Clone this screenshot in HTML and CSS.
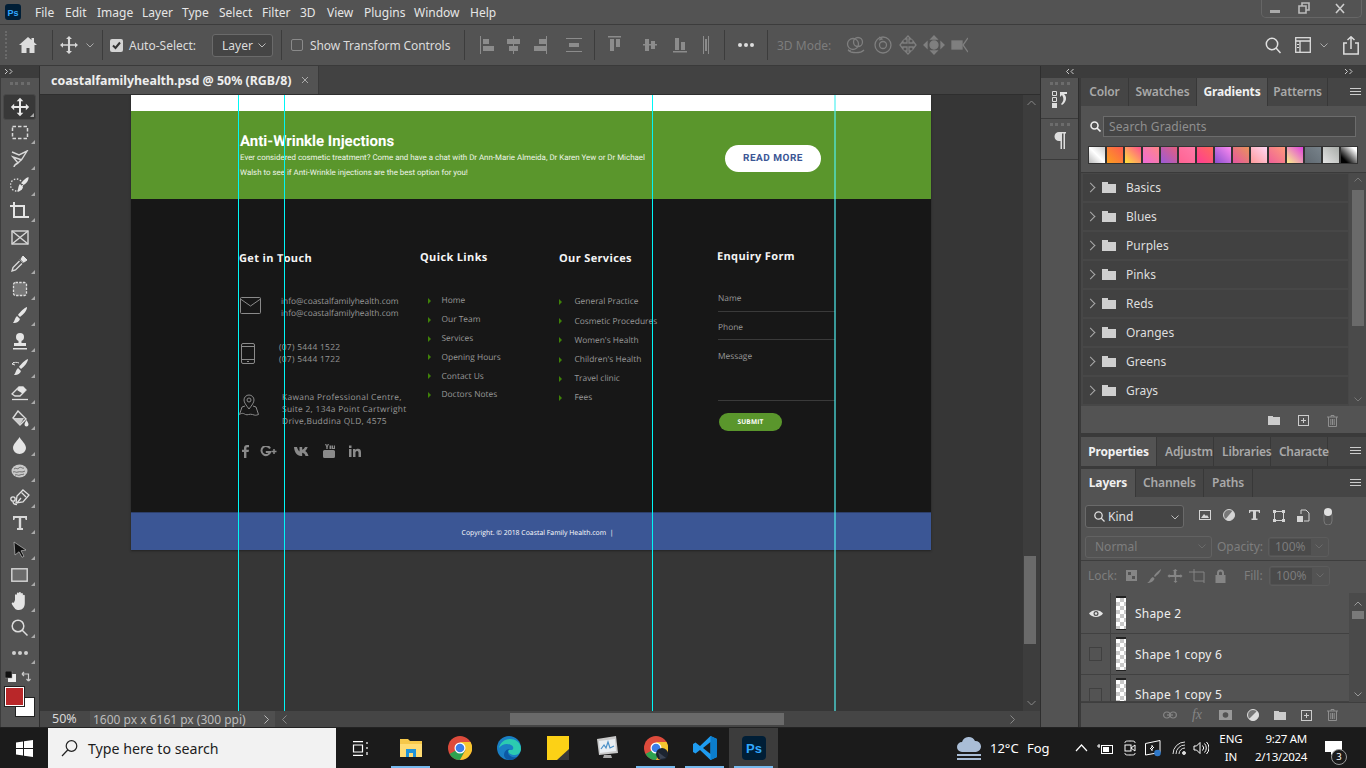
FILE: index.html
```html
<!DOCTYPE html>
<html lang="en">
<head>
<meta charset="utf-8">
<title>Photoshop</title>
<link rel="stylesheet" href="styles.css">
</head>
<body>
<div class="app">
  <header class="menubar">
    <svg class="pslogo" width="16" height="16" viewBox="0 0 16 16"><rect width="16" height="16" rx="3" fill="#001e36"/><text x="2.5" y="11.5" class="pslogo-t">Ps</text></svg>
    <nav class="menu">
      <span class="m1">File</span><span class="m2">Edit</span><span class="m3">Image</span><span class="m4">Layer</span><span class="m5">Type</span><span class="m6">Select</span><span class="m7">Filter</span><span class="m8">3D</span><span class="m9">View</span><span class="m10">Plugins</span><span class="m11">Window</span><span class="m12">Help</span>
    </nav>
    <div class="winctl">
      <svg width="101" height="17" viewBox="0 0 101 17"><rect x="8" y="10" width="10" height="3" fill="#aaa"/><path d="M37 6h7v7h-7zM40 6V3h7v7h-3" fill="none" stroke="#bbb" stroke-width="1.6"/><path d="M74 4l8 9M82 4l-8 9" stroke="#ccc" stroke-width="1.6"/></svg>
    </div>
  </header>

  <section class="options">
    <div class="grip"></div>
    <svg class="o-home" width="18" height="16" viewBox="0 0 18 16"><path d="M9 0L0 8h2.500v8h5v-5h3v5h5V8H18l-3-2.700V1h-2.500v2.100z" fill="#ddd"/></svg>
    <i class="sep s-a"></i>
    <svg class="o-move" width="18" height="18" viewBox="0 0 24 24"><path d="M12 0l4 4h-2.600v7H20V8.500l4 3.500-4 3.500V13h-6.600v7H16l-4 4-4-4h2.600v-7H4v2.500L0 12l4-3.500V11h6.600V4H8z" fill="#d8d8d8"/></svg>
    <svg class="o-chev" width="8" height="5" viewBox="0 0 8 5"><path d="M.5.5L4 4 7.500.5" fill="none" stroke="#aaa"/></svg>
    <i class="sep s-b"></i>
    <svg class="o-check" width="13" height="13" viewBox="0 0 13 13"><rect width="13" height="13" rx="2" fill="#d4d4d4"/><path d="M3 6.500l2.500 2.500L10 3.500" fill="none" stroke="#333" stroke-width="2"/></svg>
    <span class="o-auto">Auto-Select:</span>
    <div class="o-select">Layer<svg width="8" height="5" viewBox="0 0 8 5"><path d="M.5.5L4 4 7.500.5" fill="none" stroke="#bbb"/></svg></div>
    <i class="sep s-c"></i>
    <i class="o-box"></i>
    <span class="o-trans">Show Transform Controls</span>
    <i class="sep s-d"></i>
    <svg class="o-align" width="102" height="18" viewBox="0 0 102 18" fill="#8c8c8c"><path d="M0 0h1v18H0zM3 3h6v5H3zM3 10h11v5H3zM33 0h1v18h-1zM27 3h13v5H27zM29 10h9v5h-9zM66 0h1v18h-1zM59 3h7v5h-7zM54 10h12v5H54zM86 2h16v1H86zM86 15h16v1H86zM89 7h10v4H89z"/></svg>
    <i class="sep s-e"></i>
    <svg class="o-dist" width="101" height="18" viewBox="0 0 101 18" fill="#8c8c8c"><path d="M0 0h13v1.500H0zM2 3h4v12H2zM8 3h4v8H8zM35 8h14v1.500H35zM37 3h4v12h-4zM43 5h4v8h-4zM65 15h14v1.500H65zM67 2h4v12h-4zM73 6h4v8h-4zM95 0h1v18h-1zM100 0h1v18h-1zM97 3h2v12h-2z"/></svg>
    <i class="sep s-f"></i>
    <svg class="o-dots" width="16" height="4" viewBox="0 0 16 4" fill="#ddd"><circle cx="2" cy="2" r="2"/><circle cx="8" cy="2" r="2"/><circle cx="14" cy="2" r="2"/></svg>
    <i class="sep s-g"></i>
    <span class="o-3d">3D Mode:</span>
    <svg class="o-3dicons" width="122" height="20" viewBox="0 0 122 20" fill="none" stroke="#7f7f7f" stroke-width="1.300"><circle cx="7" cy="9" r="5.500"/><circle cx="12" cy="7" r="4.500"/><path d="M2 15a9 5 0 0 0 16 0M2 15l3 1"/><circle cx="37" cy="10" r="8"/><circle cx="37" cy="10" r="3.500"/><path d="M33 2l3 2-3 1"/><path d="M62 1l3 3h-2v4h4V6l3 4-3 4v-2h-4v4h2l-3 3-3-3h2v-4h-4v2l-3-4 3-4v2h4V4h-2z"/><path d="M88 1l3 3h-6zM88 19l3-3h-6zM78 10l3-3v6zM98 10l-3-3v6z" fill="#7f7f7f"/><circle cx="88" cy="10" r="4" fill="#7f7f7f"/><rect x="106" y="6" width="10" height="8" fill="#7f7f7f"/><path d="M122 3l-5 7 5 7"/></svg>
    <svg class="o-search" width="16" height="17" viewBox="0 0 16 17" fill="none" stroke="#e0e0e0" stroke-width="1.500"><circle cx="7" cy="7" r="5.700"/><path d="M11 11l4.500 5"/></svg>
    <svg class="o-work" width="16" height="16" viewBox="0 0 16 16" fill="none" stroke="#ddd" stroke-width="1.300"><rect x=".7" y=".7" width="14.600" height="14.600"/><path d="M.7 4h14.600M5 4v11.300" /><path d="M2 7h2v1H2zM2 10h2v1H2z" fill="#ddd" stroke="none"/></svg>
    <svg class="o-chev2" width="8" height="5" viewBox="0 0 8 5"><path d="M.5.5L4 4 7.500.5" fill="none" stroke="#aaa"/></svg>
    <svg class="o-share" width="16" height="19" viewBox="0 0 16 19" fill="none" stroke="#ddd" stroke-width="1.500"><path d="M4 7H.8v11h14.400V7H12M8 13V1M4.500 4L8 .8 11.500 4"/></svg>
  </section>

  <main class="work">
    <aside class="toolcol">
      <div class="collapse"><svg width="10" height="7" viewBox="0 0 10 7"><path d="M1 1l2.500 2.500L1 6M5.500 1L8 3.500 5.500 6" fill="none" stroke="#ccc"/></svg></div>
      <div class="tools">
        <div class="tgrip"></div>
        <div class="tool active more"><svg width="20" height="20" viewBox="0 0 24 24"><path d="M12 1l4 4h-2.800v5.800H19V8l4 4-4 4v-2.800h-5.800V19H16l-4 4-4-4h2.800v-5.800H5V16l-4-4 4-4v2.800h5.800V5H8z" fill="#e8e8e8"/></svg></div>
        <div class="tool more"><svg width="18" height="16" viewBox="0 0 18 16"><rect x="1.500" y="1.500" width="15" height="12" fill="none" stroke="#d8d8d8" stroke-width="1.500" stroke-dasharray="3.500 2"/></svg></div>
        <div class="tool more"><svg width="18" height="18" viewBox="0 0 18 18" fill="none" stroke="#d8d8d8" stroke-width="1.400"><path d="M1 2l7 3 8-4-5 8-4 4-5-6 9 3"/><path d="M7 13c-2 1-4 2-4 4"/></svg></div>
        <div class="tool more"><svg width="20" height="18" viewBox="0 0 20 18"><circle cx="6.500" cy="9" r="6" fill="none" stroke="#d8d8d8" stroke-width="1.400" stroke-dasharray="1.500 1.600"/><path d="M18.500 1c.5 4-3 7-5 8l-2-2c1-2 4-5 7-6zM10 8l3 3c-.5 3-4 5-6 4.500 1.500-1.500 1-5.500 3-7.500z" fill="#e6e6e6"/></svg></div>
        <div class="tool more"><svg width="19" height="19" viewBox="0 0 19 19" fill="none" stroke="#e4e4e4" stroke-width="2"><path d="M0 4h14v11M4 0v15h15"/></svg></div>
        <div class="tool"><svg width="18" height="15" viewBox="0 0 18 15" fill="none" stroke="#d8d8d8" stroke-width="1.400"><rect x="1" y="1" width="16" height="13"/><path d="M1 1l16 13M17 1L1 14"/></svg></div>
        <div class="tool more"><svg width="17" height="17" viewBox="0 0 17 17"><path d="M12 1l4 4-3 2-3-3zM9 4.500l3.500 3.500" fill="#e4e4e4" stroke="#e4e4e4"/><path d="M8.500 6L2 12.500 1 16l3.500-1L11 8.500" fill="none" stroke="#d8d8d8" stroke-width="1.400"/></svg></div>
        <div class="tool more"><svg width="18" height="18" viewBox="0 0 18 18"><rect x="2.500" y="2.500" width="13" height="13" rx="2" fill="#777" stroke="#ddd" stroke-width="1.300" stroke-dasharray="2.500 1.200"/></svg></div>
        <div class="tool more"><svg width="16" height="17" viewBox="0 0 16 17"><path d="M15 0c.5 3-4 8-7 10L6 8c2-3 6-7 9-8zM5 9l3 3c-1 3-4 4.500-7 4 2-2 1.500-5 4-7z" fill="#e6e6e6"/></svg></div>
        <div class="tool more"><svg width="16" height="17" viewBox="0 0 16 17" fill="#e4e4e4"><circle cx="8" cy="4" r="4"/><path d="M6.500 7h3v3h-3zM2 10h12v3H2zM1 15h14v1.500H1z"/></svg></div>
        <div class="tool more"><svg width="18" height="17" viewBox="0 0 18 17" fill="#e4e4e4"><path d="M17 0c0 3-4 8-7 10L8 8c2-3 6-7 9-8zM7 9l3 3c-1 3-4 4.500-7 4 2-2 1.500-5 4-7z"/><path d="M1 5c2-2 5-2 7-1M1 5l2-2M1 5l3 1" fill="none" stroke="#ddd"/></svg></div>
        <div class="tool more"><svg width="18" height="16" viewBox="0 0 18 16"><path d="M1 9l7-7h4l3 3-6 6H4z" fill="none" stroke="#ddd" stroke-width="1.300"/><path d="M8 2h4l3 3-3.500 3.500L6 5z" fill="#e6e6e6"/><path d="M1 14.500h16" stroke="#ddd" stroke-width="1.300"/></svg></div>
        <div class="tool more"><svg width="18" height="18" viewBox="0 0 18 18"><path d="M7 1l8 8-6 6-7-7z" fill="none" stroke="#ddd" stroke-width="1.400"/><path d="M2 8h11l-4 7z" fill="#ccc"/><path d="M15.500 10c1 2 2 3 2 4.500a2 2 0 0 1-4 0c0-1.500 1-2.500 2-4.500z" fill="#e8e8e8"/></svg></div>
        <div class="tool more"><svg width="14" height="17" viewBox="0 0 14 17"><path d="M6.500 0C8 3 13 7 13 11a6.500 6 0 0 1-13 0C0 7 5 3 6.500 0z" fill="#e4e4e4"/></svg></div>
        <div class="tool more"><svg width="17" height="14" viewBox="0 0 17 14"><ellipse cx="8.500" cy="7" rx="8" ry="6.500" fill="#c8c8c8"/><path d="M3 5c2-2 3 1 5-1s3 1 5 0M2 8c2-1 3 1 5 0s4 1 7-1M4 11c2-1 3 1 5 0s2 0 4-1" fill="none" stroke="#555" stroke-width=".8"/></svg></div>
        <div class="tool more"><svg width="20" height="17" viewBox="0 0 20 17" fill="none" stroke="#e0e0e0" stroke-width="1.300"><path d="M13 1l6 5-6 7-7 1 1-7z"/><path d="M7 14l4-5M11.500 3.500L16 8"/><circle cx="3" cy="10" r="2.200"/><path d="M3 12.500c0 2 2 3 4 3"/></svg></div>
        <div class="tool more"><svg width="14" height="14" viewBox="0 0 14 14" fill="#d8d8d8"><path d="M0 0h14v4h-1.300L12 2H8.200v10H10v2H4v-2h1.800V2H2L1.300 4H0z"/></svg></div>
        <div class="tool more"><svg width="14" height="17" viewBox="0 0 14 17"><path d="M1 1l12 8-5 .8 3 5.500-2 1-3-5.500L2 14z" fill="#111" stroke="#bbb" stroke-width=".7"/></svg></div>
        <div class="tool more"><svg width="17" height="14" viewBox="0 0 17 14"><rect x=".8" y=".8" width="15.400" height="12.400" fill="#6b6b6b" stroke="#d8d8d8" stroke-width="1.400"/></svg></div>
        <div class="tool more"><svg width="17" height="18" viewBox="0 0 17 18" fill="#e4e4e4"><path d="M4 8V3a1 1 0 0 1 1.900 0V1.500a1 1 0 0 1 2 0V1a1 1 0 0 1 2 0v1a1 1 0 0 1 2 0v1.500a1 1 0 0 1 1.900 0V11c0 4-2 7-6 7-3 0-4-1-7-6-.5-1 1-2 2-1z"/></svg></div>
        <div class="tool more"><svg width="17" height="17" viewBox="0 0 17 17" fill="none" stroke="#dcdcdc" stroke-width="1.500"><circle cx="7" cy="7" r="5.800"/><path d="M11 11l5.500 5.500"/></svg></div>
        <div class="tool more"><svg width="16" height="4" viewBox="0 0 16 4" fill="#d0d0d0"><circle cx="2" cy="2" r="2"/><circle cx="8" cy="2" r="2"/><circle cx="14" cy="2" r="2"/></svg></div>
        <div class="swapline">
          <svg width="11" height="11" viewBox="0 0 11 11"><rect x="3" y="3" width="8" height="8" fill="#eee"/><rect width="7" height="7" fill="#111" stroke="#999" stroke-width=".5"/></svg>
          <svg width="11" height="11" viewBox="0 0 11 11" fill="none" stroke="#ccc" stroke-width="1.200"><path d="M1 3h6.500v7M1 3l2-2M1 3l2 2M7.500 10l-2-2M7.500 10l2-2"/></svg>
        </div>
        <div class="colors"><i class="bgc"></i><i class="fgc"></i></div>
      </div>
    </aside>

    <div class="center">
      <div class="tabstrip">
        <div class="doctab"><span>coastalfamilyhealth.psd @ 50% (RGB/8)</span><svg width="8" height="8" viewBox="0 0 8 8"><path d="M1 1l6 6M7 1L1 7" stroke="#aaa"/></svg></div>
      </div>
      <div class="viewport">
        <div class="canvas">
          <article class="artboard">
            <div class="a-white"></div>
            <section class="banner">
              <div class="b-copy">
                <h2>Anti-Wrinkle Injections</h2>
                <p>Ever considered cosmetic treatment? Come and have a chat with Dr Ann-Marie Almeida, Dr Karen Yew or Dr Michael Walsh to see if Anti-Wrinkle injections are the best option for you!</p>
              </div>
              <div class="b-btn">READ MORE</div>
            </section>
            <section class="foot">
              <div class="f-col c1">
                <h3>Get in Touch</h3>
                <div class="ct r1">
                  <svg width="21" height="17" viewBox="0 0 21 17" fill="none" stroke="#8a8a8a"><rect x=".5" y=".5" width="20" height="16" rx="1"/><path d="M.5 2l10 7 10-7"/></svg>
                  <p>info@coastalfamilyhealth.com<br>info@coastalfamilyhealth.com</p>
                </div>
                <div class="ct r2">
                  <svg width="14" height="21" viewBox="0 0 14 21" fill="none" stroke="#8a8a8a"><rect x=".5" y=".5" width="13" height="20" rx="1.500"/><path d="M.5 3.500h13M.5 16.500h13M6 18.500h2"/></svg>
                  <p>(07) 5444 1522<br>(07) 5444 1722</p>
                </div>
                <div class="ct r3">
                  <svg width="20" height="22" viewBox="0 0 20 22" fill="none" stroke="#8a8a8a"><path d="M10 15C7 11 5 8.500 5 6a5 5 0 0 1 10 0c0 2.500-2 5-5 9z"/><circle cx="10" cy="6" r="2"/><path d="M6 12L3 13 .5 20.500c3-2 4-1 6 0 2 1 4-1 7 0s3 1 6 0L17 13l-3-1"/></svg>
                  <p>Kawana Professional Centre,<br>Suite 2, 134a Point Cartwright<br>Drive,Buddina QLD, 4575</p>
                </div>
                <div class="social">
                  <svg class="so-f" width="7" height="13" viewBox="0 0 7 13" fill="#8a8a8a"><path d="M2 13V7H0V4.700h2V3c0-2 1.200-3 3-3h2v2.300H5.600c-1 0-1.200.4-1.200 1.100v1.300H7L6.600 7H4.400v6z"/></svg>
                  <svg class="so-g" width="18" height="11" viewBox="0 0 18 11"><path d="M10 2.500A4.500 4.500 0 1 0 10.300 6H5.800" fill="none" stroke="#8a8a8a" stroke-width="2"/><path d="M14 3v5M11.500 5.500h5" stroke="#8a8a8a" stroke-width="1.500"/></svg>
                  <svg class="so-v" width="15" height="9" viewBox="0 0 15 9" fill="#8a8a8a"><path d="M0 0h3c.5 2 1.500 4 2.500 4.500V0h2.700v2.700C9.500 2.500 10.500 1 11 0h2.700c-.3 1.500-1.500 3-2.500 4 1.200.8 2.600 2.500 3.300 5h-3c-.5-1.500-1.500-3-3.300-3.200V9H7C3 9 .5 5.500 0 0z"/></svg>
                  <svg class="so-y" width="12" height="14" viewBox="0 0 12 14" fill="#8a8a8a"><path d="M2 0h1.300l.7 2 .7-2H6L4.700 3v2H3.300V3zM6.500 1.500h2v3.500h-2zM9 1.500h1.200V4h.8V1.500H12V5H9zM1.500 6h9A1.500 1.500 0 0 1 12 7.500v5a1.500 1.500 0 0 1-1.500 1.500h-9A1.500 1.500 0 0 1 0 12.500v-5A1.500 1.500 0 0 1 1.500 6z"/></svg>
                  <svg class="so-i" width="12" height="12" viewBox="0 0 12 12" fill="#8a8a8a"><path d="M0 4h2.500v8H0zM0 .5h2.500V3H0zM4 4h2.400v1.100C7 4.200 8 3.800 9 3.800c2.300 0 3 1.500 3 3.700V12H9.500V8c0-1-.2-2-1.400-2S6.500 7 6.500 8v4H4z"/></svg>
                </div>
              </div>
              <div class="f-col c2">
                <h3>Quick Links</h3>
                <ul class="links l-q">
                  <li>Home</li><li>Our Team</li><li>Services</li><li>Opening Hours</li><li>Contact Us</li><li>Doctors Notes</li>
                </ul>
              </div>
              <div class="f-col c3">
                <h3>Our Services</h3>
                <ul class="links l-s">
                  <li>General Practice</li><li>Cosmetic Procedures</li><li>Women's Health</li><li>Children's Health</li><li>Travel clinic</li><li>Fees</li>
                </ul>
              </div>
              <div class="f-col c4">
                <h3>Enquiry Form</h3>
                <div class="field f-name">Name</div>
                <div class="field f-phone">Phone</div>
                <div class="field f-msg">Message</div>
                <div class="submit">SUBMIT</div>
              </div>
            </section>
            <section class="copy"><span>Copyright. © 2018 Coastal Family Health.com &nbsp;|</span></section>
          </article>
          <i class="guide g1"></i><i class="guide g2"></i><i class="guide g3"></i><i class="guide g4"></i>
        </div>
        <div class="vscroll">
          <svg class="arr" width="9" height="6" viewBox="0 0 9 6"><path d="M.5 5l4-4 4 4" fill="none" stroke="#888"/></svg>
          <div class="vtrack"><div class="vthumb"></div></div>
          <svg class="arr" width="9" height="6" viewBox="0 0 9 6"><path d="M.5 1l4 4 4-4" fill="none" stroke="#888"/></svg>
        </div>
      </div>
      <div class="status">
        <span class="st-zoom">50%</span>
        <span class="st-info">1600 px x 6161 px (300 ppi)<svg width="5" height="9" viewBox="0 0 5 9"><path d="M.5.5l4 4-4 4" fill="none" stroke="#bbb"/></svg></span>
        <div class="hscroll">
          <svg width="5" height="9" viewBox="0 0 5 9"><path d="M4.500.5l-4 4 4 4" fill="none" stroke="#888"/></svg>
          <div class="hthumb"></div>
          <svg class="hright" width="5" height="9" viewBox="0 0 5 9"><path d="M.5.5l4 4-4 4" fill="none" stroke="#888"/></svg>
        </div>
      </div>
    </div>

    <div class="rightdock">
      <div class="dock-h">
        <svg width="10" height="7" viewBox="0 0 10 7"><path d="M4 1L1.500 3.500 4 6M8.500 1L6 3.500 8.500 6" fill="none" stroke="#ccc"/></svg>
        <svg width="10" height="7" viewBox="0 0 10 7"><path d="M1 1l2.500 2.500L1 6M5.500 1L8 3.500 5.500 6" fill="none" stroke="#ccc"/></svg>
      </div>
      <div class="dock-b">
        <div class="mini">
          <div class="dock-item"><div class="tgrip g-s"></div><svg width="16" height="17" viewBox="0 0 16 17"><path d="M.5.500h4v4h-4zM.5 6.500h4v4h-4z" fill="none" stroke="#ddd"/><path d="M0 12h5v5H0z" fill="#ddd"/><path d="M8 1h7v2h-3c3 2 3 8-2 11l-1-1c3-3 3-6 1-9l-2 2z" fill="#e2e2e2"/></svg></div>
          <div class="dock-item"><div class="tgrip g-s"></div><svg width="12" height="17" viewBox="0 0 12 17"><path d="M5 0h7v1.500h-1V17H9.500V1.500H8V17H6.500V9H5A4.500 4.500 0 0 1 5 0z" fill="#ddd"/></svg></div>
        </div>
        <div class="panels">
          <section class="p-grad">
            <div class="tabs t1">
              <span class="tab t-color">Color</span><span class="tab t-sw">Swatches</span><span class="tab on t-gr">Gradients</span><span class="tab t-pa">Patterns</span>
              <svg class="burger" width="11" height="8" viewBox="0 0 11 8"><path d="M0 .5h11M0 3.500h11M0 6.500h11" stroke="#ccc"/></svg>
            </div>
            <div class="gsearch">
              <svg width="11" height="11" viewBox="0 0 11 11" fill="none" stroke="#eee" stroke-width="1.600"><circle cx="4.500" cy="4.500" r="3.500"/><path d="M7 7l3.500 3.500"/></svg>
              <div class="gbox">Search Gradients</div>
            </div>
            <div class="swatches">
              <i class="s1"></i><i class="s2"></i><i class="s3"></i><i class="s4"></i><i class="s5"></i><i class="s6"></i><i class="s7"></i><i class="s8"></i><i class="s9"></i><i class="s10"></i><i class="s11"></i><i class="s12"></i><i class="s13"></i><i class="s14"></i><i class="s15"></i>
            </div>
            <div class="glist">
              <ul>
                <li>Basics</li><li>Blues</li><li>Purples</li><li>Pinks</li><li>Reds</li><li>Oranges</li><li>Greens</li><li>Grays</li>
              </ul>
              <div class="gscroll">
                <svg width="8" height="5" viewBox="0 0 8 5"><path d="M.5 4.500L4 1l3.500 3.500" fill="none" stroke="#777"/></svg>
                <div class="gtrack"><div class="gthumb"></div></div>
                <svg width="8" height="5" viewBox="0 0 8 5"><path d="M.5.500L4 4l3.500-3.500" fill="none" stroke="#777"/></svg>
              </div>
            </div>
            <div class="pfoot pf1">
              <svg width="12" height="9" viewBox="0 0 12 9" fill="#ccc"><path d="M0 0h5v1h7v8H0z"/></svg>
              <svg width="11" height="11" viewBox="0 0 11 11" fill="none" stroke="#ccc"><rect x=".5" y=".5" width="10" height="10"/><path d="M5.500 3v5M3 5.500h5"/></svg>
              <svg width="11" height="12" viewBox="0 0 11 12" fill="none" stroke="#8f8f8f"><path d="M0 2h11M4 2V.5h3V2M1.500 2v9.500h8V2M3.800 4v6M5.500 4v6M7.200 4v6"/></svg>
            </div>
          </section>
          <div class="ptabs2">
            <div class="tabs t2">
              <span class="tab on t-prop">Properties</span><span class="tab t-adj">Adjustm</span><span class="tab t-lib">Libraries</span><span class="tab t-cha">Characte</span>
              <svg class="burger" width="11" height="8" viewBox="0 0 11 8"><path d="M0 .5h11M0 3.500h11M0 6.500h11" stroke="#ccc"/></svg>
            </div>
          </div>
          <section class="p-layers">
            <div class="tabs t3">
              <span class="tab on t-lay">Layers</span><span class="tab t-ch">Channels</span><span class="tab t-pat">Paths</span>
              <svg class="burger" width="11" height="8" viewBox="0 0 11 8"><path d="M0 .5h11M0 3.500h11M0 6.500h11" stroke="#ccc"/></svg>
            </div>
            <div class="filter">
              <div class="kind">
                <svg width="11" height="11" viewBox="0 0 11 11" fill="none" stroke="#ddd" stroke-width="1.300"><circle cx="4.500" cy="4.500" r="3.700"/><path d="M7 7l3.500 3.500"/></svg>
                <span>Kind</span>
                <svg class="kchev" width="8" height="5" viewBox="0 0 8 5"><path d="M.5.500L4 4l3.500-3.500" fill="none" stroke="#bbb"/></svg>
              </div>
              <svg class="ficons" width="134" height="18" viewBox="0 0 134 18">
                <rect x=".5" y="3.500" width="11" height="9" fill="none" stroke="#d4d4d4"/><path d="M2 11l3-4 2 2 1-1 2 3z" fill="#d4d4d4"/>
                <circle cx="30" cy="8" r="5.500" fill="#777" stroke="#d4d4d4"/><path d="M30 13.500a5.500 5.500 0 0 0 0-11z" fill="#d4d4d4" transform="rotate(40 30 8)"/>
                <path d="M50 3h11v3h-1l-.5-1.500H57v7h1.500V13h-6v-1.500H54v-7h-2.500L51 6h-1z" fill="#d4d4d4"/>
                <path d="M75.500 4.500h9v9h-9z" fill="none" stroke="#d4d4d4"/><path d="M74 3h3v3h-3zM83 3h3v3h-3zM74 12h3v3h-3zM83 12h3v3h-3z" fill="#d4d4d4"/>
                <path d="M102 7V3h5l3 3v8h-5" fill="none" stroke="#d4d4d4"/><path d="M98 9h6v6h-6z" fill="#d4d4d4"/>
                <rect x="125" y="4" width="8" height="14" rx="4" fill="none" stroke="#777"/><circle cx="129" cy="5" r="4" fill="#e0e0e0"/>
              </svg>
            </div>
            <div class="blend">
              <div class="bl-sel">Normal<svg width="8" height="5" viewBox="0 0 8 5"><path d="M.5.500L4 4l3.500-3.500" fill="none" stroke="#6a6a6a"/></svg></div>
              <span class="dim bl-op">Opacity:</span>
              <div class="pct"><b>100%</b><svg width="8" height="5" viewBox="0 0 8 5"><path d="M.5.500L4 4l3.500-3.500" fill="none" stroke="#6a6a6a"/></svg></div>
            </div>
            <div class="lockrow">
              <span class="dim">Lock:</span>
              <svg class="licons" width="100" height="14" viewBox="0 0 100 14" fill="#858585"><path d="M0 1h11v11H0zM2 3v3h3V3zM6 7v3h3V7z" fill-rule="evenodd"/><path d="M35 0c0 3-4 6-6 8l-1-1c1-2 4-5 7-7zM27 8l1.500 1.500C28 12 25 14 21 14c3-1 3-5 6-6z"/><path d="M49.500 0l2 2h-1.300v4h4.300V5l2 2-2 2V8h-4.300v4h1.300l-2 2-2-2h1.300V8H43.500v1l-2-2 2-2v1h4.300V2h-1.300z"/><path d="M66 3h12v9H68V0M63 3h3M78 12v2" fill="none" stroke="#858585"/><path d="M91 6V4a3.500 3.500 0 0 1 7 0v2h1.500v8h-10V6zM93 6h3V4a1.500 1.500 0 0 0-3 0z" fill-rule="evenodd"/></svg>
              <span class="dim lk-fill">Fill:</span>
              <div class="pct"><b>100%</b><svg width="8" height="5" viewBox="0 0 8 5"><path d="M.5.500L4 4l3.500-3.500" fill="none" stroke="#6a6a6a"/></svg></div>
            </div>
            <div class="lwrap">
              <ul class="layers">
                <li><span class="eye"><svg width="14" height="9" viewBox="0 0 14 9"><path d="M0 4.500C3 0 11 0 14 4.500 11 9 3 9 0 4.500z" fill="#e4e4e4"/><circle cx="7" cy="4.500" r="2.500" fill="#535353"/><circle cx="7" cy="4.500" r="1.200" fill="#e4e4e4"/></svg></span><span class="thumb"></span><span class="lname">Shape 2</span></li>
                <li><span class="eye"><i class="vis"></i></span><span class="thumb"></span><span class="lname">Shape 1 copy 6</span></li>
                <li class="cut"><span class="eye"><i class="vis"></i></span><span class="thumb"></span><span class="lname">Shape 1 copy 5</span></li>
              </ul>
              <div class="lscroll">
                <svg width="8" height="5" viewBox="0 0 8 5"><path d="M.5 4.500L4 1l3.500 3.500" fill="none" stroke="#999"/></svg>
                <div class="lthumb"></div>
                <svg class="lbot" width="8" height="5" viewBox="0 0 8 5"><path d="M.5.500L4 4l3.500-3.500" fill="none" stroke="#999"/></svg>
              </div>
            </div>
            <div class="pfoot pf2">
              <svg width="14" height="8" viewBox="0 0 14 8" fill="none" stroke="#858585" stroke-width="1.200"><rect x=".6" y="1" width="6.500" height="6" rx="3"/><rect x="6.900" y="1" width="6.500" height="6" rx="3"/><path d="M4 4h6"/></svg>
              <span class="fx">fx</span>
              <svg width="13" height="10" viewBox="0 0 13 10"><rect width="13" height="10" fill="#999"/><circle cx="6.500" cy="5" r="2.800" fill="#535353"/></svg>
              <svg width="12" height="12" viewBox="0 0 12 12"><circle cx="6" cy="6" r="5.500" fill="#777" stroke="#ddd"/><path d="M2 10A5.500 5.500 0 0 0 10 2z" fill="#ddd"/></svg>
              <svg width="12" height="9" viewBox="0 0 12 9" fill="#ccc"><path d="M0 0h5v1h7v8H0z"/></svg>
              <svg width="11" height="11" viewBox="0 0 11 11" fill="none" stroke="#ccc"><rect x=".5" y=".5" width="10" height="10"/><path d="M5.500 3v5M3 5.500h5"/></svg>
              <svg width="11" height="12" viewBox="0 0 11 12" fill="none" stroke="#8f8f8f"><path d="M0 2h11M4 2V.5h3V2M1.500 2v9.500h8V2M3.800 4v6M5.500 4v6M7.200 4v6"/></svg>
            </div>
          </section>
        </div>
      </div>
    </div>
  </main>

  <footer class="taskbar">
    <svg class="w-logo" width="17" height="17" viewBox="0 0 17 17" fill="#fff"><path d="M0 2.400l7-1v6.600H0zM8 1.300L17 0v8H8zM0 9h7v6.600l-7-1zM8 9h9v8l-9-1.300z"/></svg>
    <div class="w-search">
      <svg width="17" height="17" viewBox="0 0 17 17" fill="none" stroke="#222" stroke-width="1.200"><circle cx="10.500" cy="6" r="5.300"/><path d="M6.700 10L1 16"/></svg>
      <span>Type here to search</span>
    </div>
    <svg class="w-tv" width="17" height="15" viewBox="0 0 17 15" fill="none" stroke="#fff" stroke-width="1.200"><path d="M1 .6h10M1 14.400h10M1.500 4h9v7h-9zM15 1v2M15 6v2M15 11v3"/></svg>
    <div class="w-apps">
      <span class="w-app on"><svg width="22" height="22" viewBox="0 0 22 22"><path d="M0 2h8l2 2h12v16H0z" fill="#f6c84a"/><path d="M0 7h22v13H0z" fill="#ffdc73"/><path d="M6 12h10v8H6z" fill="#1f93d8"/><path d="M9 16h4v4H9z" fill="#ffdc73"/></svg></span>
      <span class="w-app"><svg width="24" height="24" viewBox="0 0 24 24"><circle cx="12" cy="12" r="12" fill="#dd4b3c"/><path d="M12 12L1.600 18A12 12 0 0 0 12 24l5.500-10z" fill="#2ea24f"/><path d="M12 6h10.500A12 12 0 0 1 12 24l5.500-10z" fill="#f7c62f"/><circle cx="12" cy="12" r="5.500" fill="#fff"/><circle cx="12" cy="12" r="4.300" fill="#3b7de8"/></svg></span>
      <span class="w-app"><svg width="24" height="24" viewBox="0 0 24 24"><circle cx="12" cy="12" r="12" fill="#1a7fc4"/><path d="M24 13C24 6 18 3 13 3 7 3 3 7 2 12c3-4 8-5 12-3 3 1 3 5 0 5h-3c0 3 3 5 7 5 3 0 6-3 6-6z" fill="#2ccbb0"/><path d="M13 13c-4 0-6 3-6 6 0 2 2 5 6 5 3 0 5-1 7-3-4 1-9-1-9-5 0-1 1-3 2-3z" fill="#0c59a4"/></svg></span>
      <span class="w-app"><svg width="22" height="24" viewBox="0 0 22 24"><path d="M0 0h22v24H0z" fill="#fcd116"/><path d="M10 24l12-11v11z" fill="#3a3a3a"/></svg></span>
      <span class="w-app"><svg width="24" height="24" viewBox="0 0 24 24"><path d="M2 3l19-3 2 17-19 2z" fill="#c9c9c9"/><path d="M4 5l16-2 1 12-16 2z" fill="#e9eef2"/><path d="M6 13l3-4 2 3 2-6 2 6 4-2" fill="none" stroke="#4a90c8" stroke-width="1.200"/><path d="M9 19h7l1 3H8z" fill="#aaa"/></svg></span>
      <span class="w-app on"><svg width="24" height="24" viewBox="0 0 24 24"><circle cx="12" cy="12" r="12" fill="#dd4b3c"/><path d="M12 12L1.600 18A12 12 0 0 0 12 24l5.500-10z" fill="#2ea24f"/><path d="M12 6h10.500A12 12 0 0 1 12 24l5.500-10z" fill="#f7c62f"/><circle cx="12" cy="12" r="5.500" fill="#fff"/><circle cx="12" cy="12" r="4.300" fill="#3b7de8"/><circle cx="18" cy="18" r="6" fill="#1c2430"/><path d="M14 16l8 6-6 1z" fill="#3b4454"/></svg></span>
      <span class="w-app on"><svg width="24" height="24" viewBox="0 0 24 24"><path d="M17.500 0L24 3v18l-6.500 3L7 14l-4.500 3.500L0 16V8l2.500-1.500L7 10z" fill="#1f9cf0"/><path d="M17.500 6L10 12l7.500 6z" fill="#1b1b1b"/><path d="M17.500 0L24 3v18l-6.500 3z" fill="#0b7dcc"/></svg></span>
      <span class="w-app act on"><svg width="24" height="24" viewBox="0 0 24 24"><rect width="24" height="24" rx="4" fill="#001e36"/><text x="4" y="17" class="ps2">Ps</text></svg></span>
    </div>
    <div class="w-tray">
      <svg class="tr-w" width="24" height="26" viewBox="0 0 24 26"><path d="M5 17a5 5 0 0 1 0-10 7 7 0 0 1 13-1 5.500 5.500 0 0 1 1 11z" fill="#a9bdd6"/><path d="M0 20h24M0 24h24" stroke="#a9bdd6" stroke-width="1.800"/></svg>
      <span class="tr-t">12°C</span>
      <span class="tr-f">Fog</span>
      <svg class="tr-c" width="13" height="8" viewBox="0 0 13 8"><path d="M1 7l5.500-6L12 7" fill="none" stroke="#fff" stroke-width="1.200"/></svg>
      <svg class="tr-b" width="16" height="11" viewBox="0 0 16 11" fill="none" stroke="#fff"><rect x="4.500" y="2.500" width="11" height="8"/><path d="M6 4h6v5H6z" fill="#fff" stroke="none"/><path d="M0 3h3M2 1v4" /></svg>
      <svg class="tr-v" width="12" height="16" viewBox="0 0 12 16" fill="none" stroke="#fff"><path d="M1 3C1 1 2 1 6 1s5 0 5 2M1 13c0 2 1 2 5 2s5 0 5-2"/><rect x="1" y="5" width="6" height="6"/><path d="M7 8l4-3v6z"/></svg>
      <svg class="tr-s" width="16" height="17" viewBox="0 0 16 17"><path d="M.5 3.500L15 .5v12L.5 15z" fill="none" stroke="#fff"/><path d="M5 9l3-3h-2M9 7l-3 3h2" fill="none" stroke="#fff"/><circle cx="12.500" cy="13" r="3.300" fill="#2f78c8"/></svg>
      <svg class="tr-wf" width="14" height="14" viewBox="0 0 14 14" fill="none" stroke="#ddd"><path d="M1 13A12 12 0 0 1 13 1M4 13a9 9 0 0 1 9-9M7 13a6 6 0 0 1 6-6"/><circle cx="12" cy="12" r="1.500" fill="#ddd"/></svg>
      <svg class="tr-sn" width="16" height="14" viewBox="0 0 16 14" fill="none" stroke="#fff"><path d="M1 5h2.500L7 1.500v11L3.500 9H1zM9.500 4.500a3.500 3.500 0 0 1 0 5M11.500 2.500a6.500 6.500 0 0 1 0 9M13.500 1a8.500 8.500 0 0 1 0 12"/></svg>
      <div class="tr-l"><span>ENG</span><span>IN</span></div>
      <div class="tr-d"><span>9:27 AM</span><span>2/13/2024</span></div>
      <div class="tr-n">
        <svg width="17" height="15" viewBox="0 0 17 15" fill="#fff"><path d="M0 0h17v11h-8l-3 3.500V11H0z"/></svg>
        <span class="badge">3</span>
      </div>
    </div>
  </footer>
</div>
</body>
</html>
```

FILE: styles.css
```css
* { box-sizing: border-box; margin: 0; padding: 0; }
html, body { width: 1366px; height: 768px; overflow: hidden; background: #535353; }
body { font-family: "Noto Sans", "Open Sans", sans-serif; font-size: 12px; color: #e0e0e0; }
ul { list-style: none; }
i { display: block; font-style: normal; }
svg { display: block; flex: none; }
.app { width: 1366px; height: 768px; display: flex; flex-direction: column; }

/* menu */
.menubar { height: 25px; flex: none; display: flex; align-items: center; background: #535353; border-bottom: 1px solid #3c3c3c; position: relative; }
.pslogo { margin: 0 0 1px 5px; }
.pslogo-t { font: bold 9px "Liberation Sans", sans-serif; fill: #31a8ff; }
.menu { display: flex; margin-left: 14px; height: 24px; align-items: center; font-size: 12px; color: #e6e6e6; }
.menu span { display: block; white-space: nowrap; }
.m1 { width: 30px; } .m2 { width: 32px; } .m3 { width: 45px; } .m4 { width: 40px; } .m5 { width: 37px; } .m6 { width: 43px; }
.m7 { width: 38px; } .m8 { width: 27px; } .m9 { width: 37px; } .m10 { width: 50px; } .m11 { width: 56px; } .m12 { width: 30px; }
.winctl { position: absolute; right: 4px; top: 0; height: 18px; width: 101px; border: 1px solid #666; border-top: 0; border-radius: 0 0 5px 5px; }

/* options */
.options { height: 41px; flex: none; display: flex; align-items: center; background: #535353; border-bottom: 1px solid #3a3a3a; color: #dcdcdc; }
.grip { width: 2px; height: 28px; margin-left: 5px; border-left: 2px dotted #6a6a6a; }
.sep { width: 1px; height: 30px; background: #3c3c3c; flex: none; }
.o-home { margin-left: 12px; }
.s-a { margin-left: 15px; }
.o-move { margin-left: 7px; }
.o-chev { margin-left: 8px; }
.s-b { margin-left: 8px; }
.o-check { margin-left: 7px; }
.o-auto { margin-left: 6px; width: 84px; white-space: nowrap; }
.o-select { width: 61px; height: 23px; margin-left: -1px; background: #454545; border: 1px solid #6a6a6a; border-radius: 3px; display: flex; align-items: center; justify-content: space-between; padding: 0 6px 0 9px; }
.s-c { margin-left: 8px; }
.o-box { width: 12px; height: 12px; margin-left: 9px; border: 1px solid #8a8a8a; border-radius: 2px; }
.o-trans { margin-left: 7px; width: 145px; white-space: nowrap; letter-spacing: -.09px; }
.s-d { margin-left: 9px; }
.o-align { margin-left: 15px; }
.s-e { margin-left: 12px; }
.o-dist { margin-left: 13px; }
.s-f { margin-left: 15px; }
.o-dots { margin-left: 13px; }
.s-g { margin-left: 13px; }
.o-3d { margin-left: 9px; width: 53px; color: #7d7d7d; white-space: nowrap; }
.o-3dicons { margin-left: 16px; }
.o-search { margin-left: 297px; }
.o-work { margin-left: 14px; }
.o-chev2 { margin-left: 9px; }
.o-share { margin-left: 15px; }

/* work */
.work { flex: 1; min-height: 0; display: flex; }
.toolcol { width: 40px; flex: none; display: flex; flex-direction: column; border-right: 1px solid #2e2e2e; }
.collapse { height: 12px; background: #3c3c3c; padding: 2px 0 0 4px; flex: none; }
.tools { flex: 1; background: #535353; border-left: 1px solid #3c3c3c; position: relative; padding-top: 4px; }
.tgrip { height: 3px; margin: 0 9px; border-top: 3px dotted #6c6c6c; }
.tool { height: 26px; display: flex; align-items: center; justify-content: center; position: relative; margin: 0 3px 0 2px; }
.tools > .tgrip + .tool { margin-top: 9px; }
.tool.active { background: #383838; border: 1px solid #484848; border-radius: 3px; }
.more::after { content: ""; position: absolute; right: 1px; bottom: 2px; border-style: solid; border-width: 0 0 4px 4px; border-color: transparent transparent #aaa transparent; }
.swapline { display: flex; justify-content: space-between; margin: 5px 7px 0 4px; }
.colors { position: relative; height: 30px; margin-top: 5px; }
.fgc { position: absolute; left: 4px; top: 0; width: 19px; height: 19px; background: #b92729; border: 1px solid #fff; outline: 1px solid #222; }
.bgc { position: absolute; left: 14px; top: 10px; width: 20px; height: 20px; background: #fff; border: 1px solid #222; }

/* center */
.center { width: 1001px; flex: none; display: flex; flex-direction: column; border-right: 1px solid #2e2e2e; }
.tabstrip { height: 29px; flex: none; background: #424242; border-bottom: 1px solid #2e2e2e; }
.doctab { width: 279px; height: 28px; background: #535353; border-right: 1px solid #3a3a3a; padding: 0 0 0 11px; display: flex; align-items: center; font-size: 12.400px; font-weight: 700; color: #eee; white-space: nowrap; }
.doctab span { width: 250px; }
.viewport { flex: 1; min-height: 0; display: flex; }
.canvas { flex: 1; position: relative; background: #363636; overflow: hidden; }
.artboard { width: 800px; margin-left: 91px; height: 455px; display: flex; flex-direction: column; box-shadow: 0 1px 2px #222; }
.guide { position: absolute; top: 0; bottom: 0; width: 1px; background: #00f6f6; }
.g1 { left: 198px; } .g2 { left: 244px; } .g3 { left: 612px; }
.g4 { left: 794px; width: 2px; background: rgba(80, 240, 240, .6); }
.a-white { height: 16px; background: #fff; flex: none; }
.banner { height: 88px; flex: none; background: #5a962c; display: flex; padding-left: 109px; color: #fff; font-family: Roboto, sans-serif; text-rendering: geometricPrecision; }
.b-copy { width: 415px; padding-top: 21px; }
.b-copy h2 { font-size: 15px; font-weight: 700; line-height: 18px; white-space: nowrap; }
.b-copy p { font-size: 7.920px; line-height: 15px; margin-top: -.5px; color: #eef5e8; }
.b-btn { width: 96px; height: 27px; margin: 34px 0 0 auto; margin-right: 110px; background: #fff; border-radius: 14px; color: #3b5695; font-size: 10px; font-weight: 700; letter-spacing: .5px; display: flex; align-items: center; justify-content: center; }
.foot { height: 313px; flex: none; background: #171717; display: grid; grid-template-columns: 181px 139px 158px 118px; padding: 52px 0 0 108px; font-family: "Open Sans", sans-serif; color: #979797; font-size: 8.400px; text-rendering: geometricPrecision; }
.f-col h3 { font-size: 11px; font-weight: 700; line-height: 16px; color: #f4f4f4; letter-spacing: .35px; white-space: nowrap; }
.c2 { margin-top: -1px; margin-left: 0; }
.c4 { margin-top: -2.500px; margin-left: 0; }
.ct { display: flex; line-height: 12px; white-space: nowrap; }
.r1 { margin-top: 29px; height: 24px; padding-left: 1px; }
.r1 p { margin-left: 20px; }
.r1 svg { margin-top: 1px; }
.r2 { margin-top: 22px; height: 24px; padding-left: 2px; letter-spacing: .3px; }
.r2 p { margin-left: 24px; }
.r2 svg { margin-top: 1px; }
.r3 { margin-top: 26px; height: 36px; letter-spacing: .3px; }
.r3 p { margin-left: 23px; }
.r3 svg { margin-top: 2px; }
.social { display: flex; align-items: center; height: 16px; margin-top: 15px; padding-left: 3px; }
.so-g { margin-left: 11px; }
.so-v { margin-left: 16px; }
.so-y { margin-left: 14px; }
.so-i { margin-left: 14px; }
.links li { display: flex; align-items: center; white-space: nowrap; }
.links li::before { content: ""; border-style: solid; border-width: 3px 0 3px 3.500px; border-color: transparent transparent transparent #3f8208; margin-right: 10.500px; }
.l-q { margin-top: 25.600px; }
.l-q li { height: 18.800px; padding-left: 8px; }
.l-s { margin-top: 25.400px; }
.l-s li { height: 19.200px; }
.l-s li::before { margin-right: 12.500px; }
.c3 { margin-left: 0; }
.field { margin-left: 1px; color: #979797; border-bottom: 1px solid #3a3a3a; line-height: 12px; }
.f-name { margin-top: 28.500px; height: 19px; }
.f-phone { margin-top: 10px; height: 18px; }
.f-msg { margin-top: 11px; height: 50px; }
.submit { width: 63px; height: 18px; margin: 11.500px 0 0 2px; background: #5a962c; border-radius: 9px; color: #fff; font-size: 6.500px; font-weight: 700; display: flex; align-items: center; justify-content: center; letter-spacing: .2px; }
.copy { height: 38px; flex: none; background: #3b5695; border-top: 1px solid #2d3f6a; color: #fff; font-family: "Open Sans", sans-serif; font-size: 6.900px; display: flex; align-items: center; justify-content: center; padding: 3px 0 0 13px; white-space: nowrap; text-rendering: geometricPrecision; }
.vscroll { width: 17px; flex: none; background: #3d3d3d; display: flex; flex-direction: column; align-items: center; padding: 5px 0; gap: 4px; }
.vtrack { flex: 1; width: 100%; padding: 446px 4px 0 1px; }
.vthumb { height: 88px; background: #6a6a6a; }
.status { height: 16px; flex: none; background: #474747; display: flex; align-items: center; color: #cfcfcf; white-space: nowrap; }
.st-zoom { width: 49px; height: 16px; padding-left: 12px; line-height: 16px; color: #d8d8d8; font-size: 12.500px; }
.st-info { width: 185px; height: 16px; margin-left: 1px; padding-left: 3px; background: #4f4f4f; display: flex; align-items: center; justify-content: space-between; padding-right: 6px; color: #bcbcbc; }
.hscroll { flex: 1; height: 16px; background: #454545; display: flex; align-items: center; padding-left: 7px; }
.hthumb { width: 274px; height: 12px; margin-left: 223px; background: #6a6a6a; }
.hright { margin-left: 226px; }

/* right */
.rightdock { flex: 1; min-width: 0; display: flex; flex-direction: column; background: #3a3a3a; }
.dock-h { height: 12px; flex: none; background: #3c3c3c; display: flex; justify-content: space-between; padding: 2px 12px 0 24px; }
.dock-b { flex: 1; min-height: 0; display: flex; }
.mini { width: 38px; flex: none; background: #535353; border-right: 1px solid #2e2e2e; }
.dock-item { height: 41px; border-bottom: 1px solid #3a3a3a; display: flex; flex-direction: column; align-items: center; gap: 6px; padding-top: 4px; }
.g-s { margin: 0; width: 20px; }
.panels { flex: 1; margin-left: 2px; min-width: 0; display: flex; flex-direction: column; background: #3a3a3a; }
.p-grad { height: 356px; flex: none; background: #535353; display: flex; flex-direction: column; border-bottom: 1px solid #3a3a3a; }
.tabs { height: 28px; flex: none; display: flex; align-items: center; background: #454545; position: relative; font-weight: 600; color: #a9a9a9; white-space: nowrap; letter-spacing: -.15px; }
.tab { display: flex; align-items: center; justify-content: center; height: 100%; border-right: 1px solid #383838; }
.tab.on { background: #535353; color: #f0f0f0; font-weight: 700; }
.t1 .tab, .t3 .tab { padding-bottom: 2px; }
.burger { position: absolute; right: 5px; top: 10px; }
.t-color { width: 48px; } .t-sw { width: 68px; } .t-gr { width: 71px; } .t-pa { width: 60px; }
.gsearch { height: 41px; flex: none; display: flex; align-items: center; padding-left: 9px; }
.gbox { width: 253px; height: 21px; margin-left: 2px; background: #454545; border: 1px solid #6c6c6c; padding-left: 5px; line-height: 19px; color: #8f8f8f; letter-spacing: .1px; }
.swatches { display: flex; gap: 2px; padding-left: 8px; height: 26px; flex: none; border-bottom: 1px solid #3a3a3a; }
.swatches i { width: 16px; height: 16px; outline: 1px solid #333; }
.s1 { background: linear-gradient(45deg, #bbb, #fff 50%, #ccc); }
.s2 { background: linear-gradient(45deg, #fba01e, #ff5a50); }
.s3 { background: linear-gradient(45deg, #ffe33a, #ff4f8e); }
.s4 { background: linear-gradient(45deg, #ee6bd7, #ff8686); }
.s5 { background: linear-gradient(45deg, #9a5ad8, #e55f7c); }
.s6 { background: linear-gradient(45deg, #ff6292, #ff7aa8); }
.s7 { background: linear-gradient(45deg, #ff3c94, #ff6a5a); }
.s8 { background: linear-gradient(45deg, #8a4fd0, #ff8bf0); }
.s9 { background: linear-gradient(45deg, #e555a0, #e8945a); }
.s10 { background: linear-gradient(45deg, #ff9a9a, #ffd8f5); }
.s11 { background: linear-gradient(45deg, #ee5f98, #ff9b7a); }
.s12 { background: linear-gradient(45deg, #fbf08a, #e03fe0); }
.s13 { background: linear-gradient(45deg, #5f6870, #78838b); }
.s14 { background: linear-gradient(45deg, #e4e4e4, #a8aca8); }
.s15 { background: linear-gradient(45deg, #000 20%, #fff 85%); }
.glist { flex: 1; display: flex; min-height: 0; background: #474747; }
.glist ul { width: 267px; padding: 1px 0 0 2px; }
.glist li { height: 29px; background: #414141; border-bottom: 2px solid #474747; display: flex; align-items: center; padding-left: 43px; color: #dedede; position: relative; }
.glist li::before { content: ""; position: absolute; left: 19px; top: 8px; width: 14px; height: 11px; background: linear-gradient(#cfcfcf, #cfcfcf) 0 2px / 100% 100% no-repeat, linear-gradient(#cfcfcf, #cfcfcf) 0 0 / 6px 2px no-repeat; }
.glist li::after { content: ""; position: absolute; left: 4px; top: 10px; width: 6px; height: 6px; border-top: 1px solid #aaa; border-right: 1px solid #aaa; transform: rotate(45deg); }
.gscroll { width: 17px; display: flex; flex-direction: column; align-items: center; padding: 4px 0; background: #4a4a4a; margin-left: 1px; }
.gtrack { flex: 1; width: 12px; margin: 8px 0 0; }
.gthumb { height: 136px; background: #6a6a6a; }
.pfoot { height: 27px; flex: none; display: flex; align-items: center; justify-content: flex-end; background: #535353; }
.pf1 { gap: 18px; padding: 2px 28px 0 0; }
.ptabs2 { height: 35px; flex: none; padding-top: 3px; background: #3a3a3a; }
.t2 { height: 29px; }
.t-prop { width: 76px; } .t-adj { width: 57px; justify-content: flex-start; padding-left: 8px; } .t-lib { width: 57px; justify-content: flex-start; padding-left: 8px; } .t-cha { width: 57px; justify-content: flex-start; padding-left: 8px; letter-spacing: -.3px; }
.p-layers { flex: 1; min-height: 0; background: #535353; display: flex; flex-direction: column; }
.t3 { height: 28px; }
.t-lay { width: 55px; } .t-ch { width: 68px; } .t-pat { width: 49px; }
.filter { height: 38px; flex: none; display: flex; align-items: center; padding-left: 4px; }
.kind { width: 99px; height: 23px; background: #454545; border: 1px solid #6a6a6a; border-radius: 3px; display: flex; align-items: center; padding-left: 8px; gap: 3px; color: #e0e0e0; position: relative; }
.kchev { position: absolute; right: 4px; top: 9px; }
.ficons { margin-left: 15px; }
.blend { height: 26px; flex: none; display: flex; align-items: center; padding: 0 0 2px 4px; border-bottom: 1px solid #3e3e3e; }
.bl-sel { width: 127px; height: 22px; border: 1px solid #626262; border-radius: 3px; display: flex; align-items: center; justify-content: space-between; padding: 0 5px 0 9px; color: #7e7e7e; }
.dim { color: #7e7e7e; }
.bl-op { margin-left: 5px; width: 51px; }
.pct { width: 61px; height: 20px; border: 1px solid #5c5c5c; border-radius: 3px; display: flex; align-items: center; padding: 0 5px 0 1px; justify-content: space-between; }
.pct b { width: 41px; height: 16px; background: #4a4a4a; color: #7c7c7c; font-weight: 400; line-height: 16px; padding-left: 5px; }
.lockrow { height: 32px; flex: none; display: flex; align-items: center; padding: 0 0 3px 7px; }
.licons { margin-left: 9px; }
.lk-fill { margin-left: 18px; width: 25px; }
.lwrap { height: 109px; flex: none; display: flex; overflow: hidden; }
.layers { width: 268px; flex: none; }
.layers li { height: 41px; display: flex; align-items: center; border-bottom: 1px solid #414141; color: #eee; }
.layers .cut { height: 27px; overflow: hidden; align-items: flex-start; }
.eye { width: 30px; height: 100%; border-right: 1px solid #414141; display: flex; align-items: center; justify-content: center; flex: none; }
.vis { width: 13px; height: 14px; border: 1px solid #404040; }
.thumb { width: 10px; height: 34px; margin-left: 5px; flex: none; border-top: 2px solid #222; border-bottom: 1px solid #222; background: repeating-conic-gradient(#c9c9c9 0 25%, #fff 0 50%) 0 0 / 8px 8px; }
.lname { margin-left: 9px; letter-spacing: .2px; white-space: nowrap; }
.cut .eye { height: 40px; }
.cut .thumb { margin-top: 3px; }
.cut .lname { margin-top: 11px; }
.lscroll { flex: 1; background: #4a4a4a; display: flex; flex-direction: column; align-items: center; padding-top: 8px; }
.lthumb { width: 12px; height: 8px; margin-top: 5px; background: #7a7a7a; }
.lbot { margin-top: 73px; }
.pf2 { flex: 1; gap: 15px; padding-right: 28px; height: auto; border-top: 1px solid #3e3e3e; }
.fx { font: italic 14px "Liberation Serif", serif; color: #858585; margin: 0 2px 0 0; }

/* taskbar */
.taskbar { height: 41px; flex: none; display: flex; align-items: center; background: #1b1b1b; border-top: 1px solid #222; color: #fff; white-space: nowrap; }
.w-logo { margin-left: 16px; }
.w-search { width: 288px; height: 40px; margin-left: 15px; background: #f2f2f2; display: flex; align-items: center; padding-left: 13px; gap: 10px; color: #1d1d1d; font-size: 14.200px; }
.w-tv { margin-left: 16px; }
.w-apps { display: flex; margin-left: 17px; height: 40px; align-items: center; }
.w-app { width: 49px; height: 40px; display: flex; align-items: center; justify-content: center; position: relative; }
.w-app.on::after { content: ""; position: absolute; left: 5px; right: 5px; bottom: 0; height: 2px; background: #76b9ed; }
.act { background: #3c3c3c; }
.ps2 { font: bold 13px "Liberation Sans", sans-serif; fill: #31a8ff; }
.w-tray { display: flex; align-items: center; height: 40px; margin-left: auto; font-size: 13px; position: relative; width: 409px; }
.tr-t { margin-left: 9px; width: 37px; }
.tr-f { width: 42px; }
.tr-c { margin-left: 6px; }
.tr-b { margin-left: 9px; }
.tr-v { margin-left: 11px; }
.tr-s { margin-left: 9px; }
.tr-wf { margin-left: 11px; }
.tr-sn { margin-left: 7px; }
.tr-l { width: 26px; margin-left: 9px; display: flex; flex-direction: column; align-items: center; font-size: 11.500px; line-height: 18px; }
.tr-d { margin-left: 9px; width: 54px; display: flex; flex-direction: column; align-items: flex-end; font-size: 11.500px; line-height: 18px; letter-spacing: -.3px; }
.tr-n { margin-left: 18px; position: relative; }
.badge { position: absolute; left: 6px; top: 8px; width: 16px; height: 16px; border-radius: 50%; background: #1b1b1b; border: 1px solid #9a9a9a; font-size: 9.500px; line-height: 14px; text-align: center; }
```
